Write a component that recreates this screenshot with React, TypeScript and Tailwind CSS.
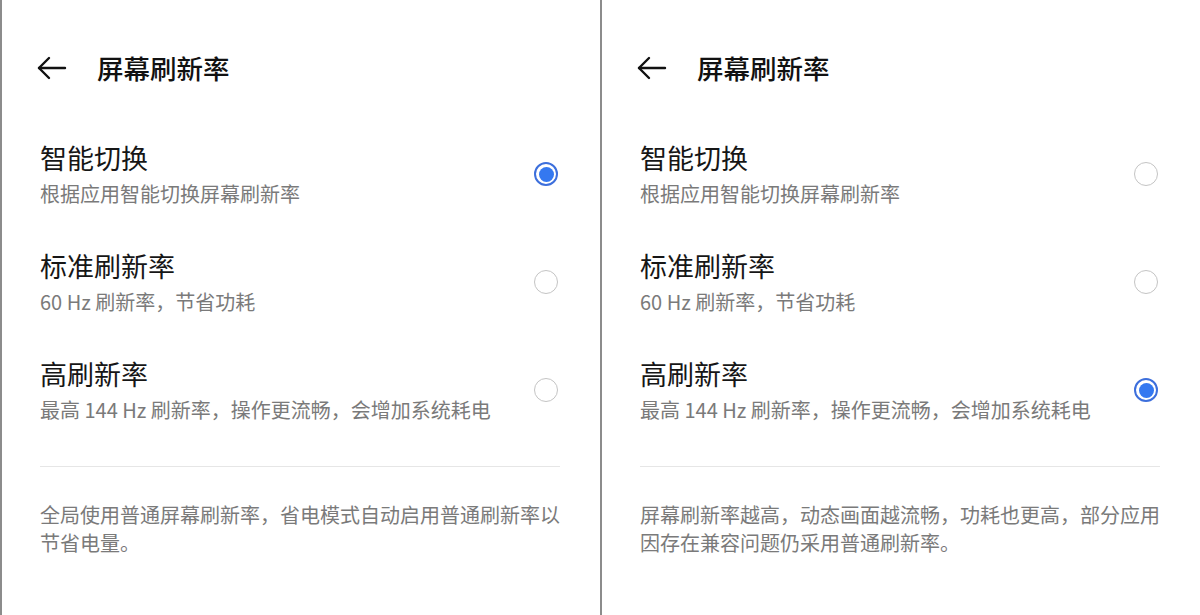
import React from "react";

const FONT = { fontFamily: '"Noto Sans CJK SC", "Noto Sans", sans-serif' };

function BackArrow() {
  return (
    <svg width="30" height="24" viewBox="0 0 30 24" fill="none" stroke="#111" strokeWidth="2.4" strokeLinecap="round" strokeLinejoin="round">
      <path d="M2 12 H28" />
      <path d="M12 2 L2 12 L12 22" />
    </svg>
  );
}

function Radio({ checked }: { checked: boolean }) {
  if (checked) {
    return (
      <div className="w-[24px] h-[24px] rounded-full border-2 border-[#3d6fdc] flex items-center justify-center bg-white">
        <div className="w-[15px] h-[15px] rounded-full bg-[#3478f0]" />
      </div>
    );
  }
  return <div className="w-[24px] h-[24px] rounded-full border-[1.5px] border-[#c4c4c4] bg-white" />;
}

const options = [
  { title: "智能切换", sub: "根据应用智能切换屏幕刷新率" },
  { title: "标准刷新率", sub: "60 Hz 刷新率，节省功耗" },
  { title: "高刷新率", sub: "最高 144 Hz 刷新率，操作更流畅，会增加系统耗电" },
];

function Panel({ selected, footer }: { selected: number; footer: string[] }) {
  return (
    <div className="w-[600px] h-[615px] bg-white border-l-2 border-[#8c8c8c] pl-[38px] pr-[40px] flex flex-col" style={FONT}>
      <div className="pt-[50px] h-[86px] flex items-center">
        <div className="w-[30px] -ml-[3px] flex items-center">
          <BackArrow />
        </div>
        <div className="ml-[30px] text-[26.5px] leading-[36px] text-[#111] font-medium">屏幕刷新率</div>
      </div>
      <div className="mt-[54px] flex flex-col">
        {options.map((o, i) => (
          <div key={i} className="flex items-center justify-between pb-[40px]">
            <div className="flex flex-col">
              <div className="text-[27px] leading-[36px] text-[#161616]">{o.title}</div>
              <div className="mt-[4px] text-[20px] leading-[28px] text-[#7a7a7a]">{o.sub}</div>
            </div>
            <div className="mr-[2px]">
              <Radio checked={selected === i} />
            </div>
          </div>
        ))}
      </div>
      <div className="h-px bg-[#e6e6e6] mt-[2px]" />
      <div className="mt-[34px] text-[20px] leading-[28px] text-[#7a7a7a]">
        {footer.map((l, i) => (
          <div key={i} className="whitespace-nowrap">{l}</div>
        ))}
      </div>
    </div>
  );
}

export default function App() {
  return (
    <div className="w-[1200px] h-[615px] flex bg-white overflow-hidden">
      <Panel selected={0} footer={["全局使用普通屏幕刷新率，省电模式自动启用普通刷新率以", "节省电量。"]} />
      <Panel selected={2} footer={["屏幕刷新率越高，动态画面越流畅，功耗也更高，部分应用", "因存在兼容问题仍采用普通刷新率。"]} />
    </div>
  );
}
